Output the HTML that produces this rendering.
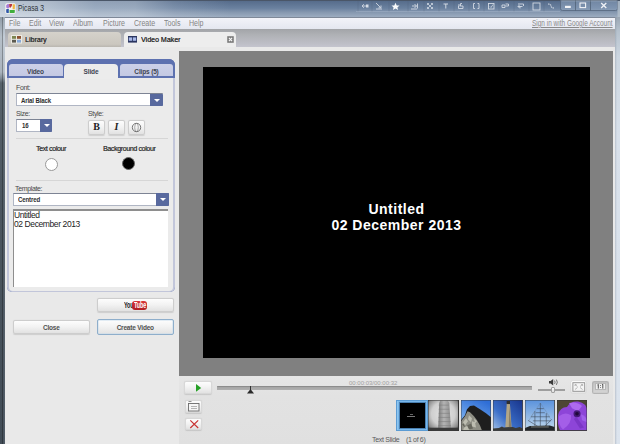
<!DOCTYPE html>
<html><head><meta charset="utf-8">
<style>
*{margin:0;padding:0;box-sizing:border-box}
html,body{width:620px;height:444px;overflow:hidden;background:#e9e9e9;font-family:"Liberation Sans",sans-serif}
.a{position:absolute}
#title{left:0;top:0;width:620px;height:17px;border-top:1px solid #4a5668;
background:linear-gradient(90deg,rgba(235,240,245,.66) 0%,rgba(228,234,240,.6) 50px,rgba(215,224,234,.45) 95px,rgba(220,228,236,.42) 135px,rgba(205,215,228,.18) 175px,rgba(255,255,255,0) 230px),linear-gradient(#566c8b,#6a819f 45%,#8597af 70%,#9cacc0 100%)}
#lframe{left:0;top:17px;width:5px;height:427px;background:linear-gradient(90deg,rgba(0,0,0,.05) 0,rgba(0,0,0,.05) 2px,rgba(0,0,0,.3) 2px,rgba(0,0,0,.3) 3px,rgba(0,0,0,.0) 3px,rgba(255,255,255,.08) 5px),linear-gradient(#9aa6b2 0,#c0cad4 20px,#b4bec8 55px,#8a96a1 61px,#5a6670 66px,#4f5a64 200px,#45505b 444px)}
#rframe{left:615px;top:17px;width:5px;height:427px;background:linear-gradient(90deg,rgba(90,100,115,.25) 0,rgba(90,100,115,0) 2px),linear-gradient(#9aa6b4 0,#b6c2ce 14px,#ccd6e0 40px,#d8e0ea 120px,#dce4ee 444px)}
#menu{left:5px;top:17px;width:610px;height:12px;background:linear-gradient(#f2f3f9,#e4e7f0);border-top:1px solid #7e8898}
#menu span{position:absolute;top:0px;font-size:8.5px;color:#848484;white-space:nowrap;transform:scaleX(.83);transform-origin:0 0}
#tabs{left:5px;top:29px;width:610px;height:18px;background:linear-gradient(#a2a4a8,#b0b2b6 35%,#bdbec6 80%,#c4c4ce)}
#content{left:5px;top:47px;width:609px;height:397px;background:#e9e9e9}
#gray{left:179px;top:51px;width:434px;height:325px;background:#808080}
#black{left:203px;top:67px;width:387px;height:291px;background:#000}
.ttl{font-size:8.8px;color:#2e3238;transform:scaleX(.77);transform-origin:0 0;white-space:nowrap}
.vt{color:#fff;font-weight:bold;font-size:14px;letter-spacing:0.5px;margin-top:-0.5px;text-align:center;width:387px;left:203px}
.tab{top:32px;height:15px;border-radius:4px 4px 0 0}
.tabtxt{font-size:8px;color:#2e2e2e;top:35px;transform:scaleX(.88);transform-origin:0 0;white-space:nowrap;text-shadow:0.3px 0 #444}
#box{left:7px;top:59px;width:168px;height:233px;border:1.5px solid #8c9ac4;border-top:none;border-radius:5px;background:#ececec}
.lbl{font-size:7px;color:#484848;letter-spacing:-0.35px;white-space:nowrap}
.tt{top:67.5px;font-size:6.5px;font-weight:bold;color:#3e4452;text-align:center;letter-spacing:-0.15px;white-space:nowrap}
.combo{background:#fff;border:1px solid #b0b6c4;border-top-color:#7d8494;height:12px}
.dd{background:#58699e;border-radius:0 1px 1px 0}
.dd:after{content:"";position:absolute;left:3.5px;top:4.5px;border-left:3px solid transparent;border-right:3px solid transparent;border-top:3px solid #fff}
.btn{border:1px solid #cdcdcd;border-radius:2px;background:linear-gradient(#fdfdfd,#f3f3f3 45%,#e2e2e2);box-shadow:0 0.5px 1px rgba(0,0,0,.12)}
.btxt{font-size:7px;color:#444;text-align:center;width:100%;top:3px}
.bt{top:323.5px;font-size:6.5px;font-weight:bold;color:#505050;text-align:center;letter-spacing:-0.2px;white-space:nowrap}
.ct{font-size:7px;font-weight:bold;color:#2e2e2e;letter-spacing:-0.15px;white-space:nowrap;transform:scaleX(.87);transform-origin:0 0}
.thumb{top:400px;width:30px;height:31px}
</style></head><body>
<div id="title" class="a"></div>
<div id="lframe" class="a"></div>
<div id="rframe" class="a"></div>
<div id="menu" class="a">
<span style="left:4px">File</span>
<span style="left:23.6px">Edit</span>
<span style="left:44px">View</span>
<span style="left:68px">Album</span>
<span style="left:98px">Picture</span>
<span style="left:129.3px">Create</span>
<span style="left:158.6px">Tools</span>
<span style="left:184.2px">Help</span>
<span style="left:527px;text-decoration:underline;color:#8a8a8a;transform:scaleX(.761)">Sign in with Google Account</span>
</div>
<div id="tabs" class="a"></div>
<div id="content" class="a"></div>

<!-- title icon & text -->
<svg class="a" style="left:4.5px;top:3px" width="11" height="11" viewBox="0 0 11 11">
<rect x="0.3" y="0.3" width="10.4" height="10.4" rx="1.5" fill="#f4f4f2"/>
<path d="M1.2 2.5 Q1.5 1 3 1 L4.2 1.2 L4.5 4.5 L2.5 5.5 L1.2 4.5 Z" fill="#a77ad6"/>
<path d="M4.2 1 L7.2 1 L6.8 3 L5.2 5 L4.3 3.5 Z" fill="#b9363f"/>
<path d="M7.6 1.2 L9.6 1.2 Q9.9 1.5 9.9 2.5 L9.8 6.2 L7.6 6.2 Z" fill="#eeb63e"/>
<path d="M4.6 7 L9.8 7 L9.8 9.2 Q9.8 9.9 9 9.9 L4.6 9.9 Z" fill="#3fae3c"/>
<path d="M1.2 6.2 L3.8 5.8 L3.8 9.9 L2 9.9 Q1.2 9.9 1.2 9 Z" fill="#2d55a8"/>
</svg>
<div class="a ttl" style="left:17.5px;top:3.2px">Picasa 3</div>

<!-- toolbar icons -->
<svg class="a" style="left:350px;top:0" width="270" height="17" viewBox="350 0 270 17">
<g stroke="#51637a" stroke-width="0.6" opacity="0.45">
<path d="M358 1 V12 M372 1 V12 M389 1 V12 M408 1 V12 M424 1 V12 M439 1 V12 M454 1 V12 M469 1 V12 M484 1 V12 M499 1 V12 M514 1 V12 M529 1 V12 M544 1 V12"/>
</g>
<path d="M356 11.5 H560" stroke="#a9b8cb" stroke-width="0.8" opacity="0.6"/>
<g fill="none" stroke="#eef1f6" stroke-width="0.85" opacity="0.8">
<path d="M362 6 H368 M364 4.2 L362 6 L364 7.8"/><rect x="366" y="4.5" width="2.5" height="3" fill="#f4f6fa" stroke="none"/>
<path d="M376 3 L380.5 7.5 M378.5 7.8 H381 V5.5 M376 9 H382" stroke-width="0.9"/>
<path d="M412 6 H416.5 M414.5 4 L416.5 6 L414.5 8 M417.5 3.5 V8.5 M411 9 H417" stroke-width="0.9"/>
<path d="M427.5 3.5 L432.5 8.5 M432.5 3.5 L427.5 8.5 M427.5 3.5 H429 M427.5 3.5 V5 M432.5 8.5 H431 M432.5 8.5 V7 M432.5 3.5 H431 M432.5 3.5 V5 M427.5 8.5 H429 M427.5 8.5 V7" stroke-width="0.8"/>
<path d="M443.5 4 H448 M445.8 4 V8.5" stroke-width="1"/>
<path d="M459 4 V6 H458.5 V8.5 H463 V6 H459.5 M460.5 6 V3.5 H462" stroke-width="0.9"/>
<path d="M473.5 3.5 V8.5 M479 3.5 V8.5 M473.5 3.5 H475 M473.5 8.5 H475 M479 3.5 H477.5 M479 8.5 H477.5" stroke-width="0.9"/>
<rect x="488.5" y="3.5" width="5.5" height="5.5" stroke-width="0.9"/><path d="M490 6.5 L491 7.5 L493 4.5" stroke-width="0.8"/>
<path d="M502 5 H505 V7.5 H502 Z M505.5 4 H508.5 V6 H505.5" stroke-width="0.9"/>
<path d="M518 4 H523.5 V6 M518 6.5 H522.5 M518 6.5 L519.5 5 M518 6.5 L519.5 8 M520 8.5 V6.5" stroke-width="0.9"/>
<rect x="533" y="3" width="7" height="7" stroke-width="0.9"/>
<path d="M548 4 Q551 4 551 6 Q551 8 554 8" stroke-width="1.1" stroke-dasharray="1.5 0.7"/>
</g>
<path d="M395.5 2.8 L396.7 5.4 L399.5 5.6 L397.4 7.4 L398.1 10 L395.5 8.6 L392.9 10 L393.6 7.4 L391.5 5.6 L394.3 5.4 Z" fill="#fbfcfd"/>
<!-- window buttons -->
<path d="M560.5 0 V8.5 Q560.5 10.5 562.5 10.5 H615.5 Q617.5 10.5 617.5 8.5 V0" fill="rgba(175,195,220,.3)" stroke="#56667c" stroke-width="0.8"/>
<path d="M575.5 0 V10.5 M590.5 0 V10.5" stroke="#4b5b70" stroke-width="0.7"/>
<path d="M561.5 1 H616.5" stroke="rgba(255,255,255,.25)" stroke-width="0.8"/>
<rect x="565" y="5.8" width="5.8" height="2.2" fill="#f0f2f6"/>
<rect x="580" y="3" width="5.6" height="4.6" fill="none" stroke="#f0f2f6" stroke-width="1.1"/>
<path d="M601.2 3 L606.3 8 M606.3 3 L601.2 8" stroke="#f0f2f6" stroke-width="1.3"/>
<rect x="617.5" y="1" width="2.5" height="16" fill="#b4c0cc" opacity="0.8"/>
</svg>

<!-- tabs -->
<div class="a tab" style="left:8px;width:112.5px;background:linear-gradient(#d5d2cb,#cbc7bf 82%,#b9b6b0)"></div>
<svg class="a" style="left:11px;top:35px" width="11" height="8.5" viewBox="0 0 11 8.5">
<rect x="0" y="0" width="11" height="8.5" fill="#ecebe4"/>
<rect x="1" y="1" width="4" height="2.8" fill="#7d8550"/>
<rect x="6" y="1" width="4" height="2.8" fill="#8d5232"/>
<rect x="1" y="4.8" width="4" height="2.8" fill="#5c5a50"/>
<rect x="6" y="4.8" width="4" height="2.8" fill="#86a8d8"/>
</svg>
<div class="a tabtxt" style="left:25.3px">Library</div>
<div class="a tab" style="left:124px;width:112px;background:#ededed"></div>
<svg class="a" style="left:128px;top:36px" width="9" height="6.6" viewBox="0 0 9 6.6">
<rect x="0" y="0" width="9" height="6.6" fill="#2a3560"/>
<rect x="0.8" y="1.4" width="3.3" height="3.4" fill="#a8b8e8"/>
<rect x="4.9" y="1.4" width="3.3" height="3.4" fill="#a8b8e8"/>
</svg>
<div class="a tabtxt" style="left:141px">Video Maker</div>
<svg class="a" style="left:226.5px;top:36px" width="7" height="7" viewBox="0 0 7 7">
<rect x="0.3" y="0.3" width="6.4" height="6.4" rx="0.8" fill="#7c7c7c" stroke="#8a8a8a" stroke-width="0.6"/>
<path d="M1.9 1.9 L5.1 5.1 M5.1 1.9 L1.9 5.1" stroke="#fafafa" stroke-width="1.1"/>
</svg>

<!-- left panel box -->
<div class="a" style="left:7px;top:59px;width:168px;height:233px;border-radius:6px 6px 5px 5px;background:#5d71b0"></div>
<div class="a" style="left:7px;top:76px;width:167.5px;height:216px;border-radius:0 0 5px 5px;background:#c2c6da"></div>
<div class="a" style="left:7px;top:59px;width:168px;height:19px;background:#5d71b0;border-radius:6px 6px 0 0"></div>
<div class="a" style="left:8.5px;top:64.3px;width:54px;height:12px;background:linear-gradient(#ccd0e8,#c4c9e3);border-radius:3px 3px 0 0"></div>
<div class="a" style="left:120px;top:64.3px;width:53px;height:12px;background:linear-gradient(#ccd0e8,#c4c9e3);border-radius:3px 3px 0 0"></div>
<div class="a" style="left:8.5px;top:77.5px;width:164.5px;height:213.5px;background:#ebebeb;border-radius:0 0 4px 4px"></div>
<div class="a" style="left:64px;top:64px;width:54px;height:15px;background:#ececec;border-radius:4px 4px 0 0"></div>
<div class="a tt" style="left:8.5px;width:54px">Video</div>
<div class="a tt" style="left:64px;width:54px">Slide</div>
<div class="a tt" style="left:120px;width:53px">Clips (5)</div>

<div class="a lbl" style="left:16px;top:84px">Font:</div>
<div class="a combo" style="left:16px;top:93px;width:147px;height:13px"></div>
<div class="a ct" style="left:21.3px;top:96.6px">Arial Black</div>
<div class="a dd" style="left:150px;top:94px;width:13px;height:12px"></div>

<div class="a lbl" style="left:16px;top:110px">Size:</div>
<div class="a combo" style="left:16px;top:119px;width:36px;height:13px"></div>
<div class="a ct" style="left:21.6px;top:122.4px">16</div>
<div class="a dd" style="left:40px;top:119px;width:12px;height:13px"></div>

<div class="a lbl" style="left:88px;top:110px">Style:</div>
<div class="a btn" style="left:88px;top:120px;width:17px;height:15px"></div>
<div class="a" style="left:88px;top:121px;width:17px;text-align:center;font-family:'Liberation Serif',serif;font-weight:bold;font-size:10px;color:#222">B</div>
<div class="a btn" style="left:108px;top:120px;width:17px;height:15px"></div>
<div class="a" style="left:108px;top:121px;width:17px;text-align:center;font-family:'Liberation Serif',serif;font-weight:bold;font-style:italic;font-size:10px;color:#222">I</div>
<div class="a btn" style="left:128px;top:120px;width:17px;height:15px"></div>
<svg class="a" style="left:131px;top:122px" width="11" height="11" viewBox="0 0 11 11"><circle cx="5.5" cy="5.5" r="4.2" fill="none" stroke="#555" stroke-width="0.8"/><ellipse cx="5.5" cy="5.5" rx="1.8" ry="4" fill="none" stroke="#777" stroke-width="0.6"/></svg>

<div class="a" style="left:16px;top:138px;width:152px;height:1px;background:#d6d6d6"></div>
<div class="a lbl" style="left:36px;top:145px;color:#383838;text-shadow:0.15px 0 #555">Text colour</div>
<div class="a lbl" style="left:103px;top:145px;color:#383838;text-shadow:0.15px 0 #555">Background colour</div>
<div class="a" style="left:45px;top:158px;width:13px;height:13px;border-radius:50%;background:#fff;border:1px solid #999"></div>
<div class="a" style="left:122px;top:156.5px;width:13px;height:13px;border-radius:50%;background:#000;border:1px solid #666"></div>
<div class="a" style="left:16px;top:180px;width:152px;height:1px;background:#d6d6d6"></div>

<div class="a lbl" style="left:15px;top:185px">Template:</div>
<div class="a combo" style="left:13px;top:193px;width:156px;height:13px"></div>
<div class="a ct" style="left:18.3px;top:196.4px">Centred</div>
<div class="a dd" style="left:156px;top:193px;width:13px;height:13px"></div>

<div class="a" style="left:13px;top:209px;width:155px;height:78px;background:#fff;border-top:2px solid #8e8e8e;border-left:1px solid #8e8e8e"></div>
<div class="a" style="left:14px;top:211px;font-size:8.5px;line-height:8.7px;color:#222;letter-spacing:-0.4px;white-space:nowrap">Untitled<br>02 December 2013</div>

<!-- buttons -->
<div class="a btn" style="left:96.5px;top:297.5px;width:77.5px;height:14.5px"></div>
<div class="a" style="left:123.6px;top:300.3px;font-size:9px;font-weight:bold;color:#1a1a1a;transform:scaleX(0.6);transform-origin:0 0;letter-spacing:-0.2px;white-space:nowrap" id="yt1">You</div>
<div class="a" style="left:132.4px;top:301px;width:14.5px;height:8.8px;background:linear-gradient(#d8363a,#b01c22);border-radius:3px"></div>
<div class="a" style="left:133.6px;top:300.3px;font-size:9px;font-weight:bold;color:#fff;transform:scaleX(0.6);transform-origin:0 0;letter-spacing:-0.2px;white-space:nowrap" id="yt2">Tube</div>
<div class="a btn" style="left:12.5px;top:319.5px;width:77.5px;height:14.5px"></div>
<div class="a bt" style="left:12.5px;width:77.5px">Close</div>
<div class="a btn" style="left:96.5px;top:319px;width:77.5px;height:16px;border-color:#8eaecb;box-shadow:inset 0 0 0 0.5px #c8dcec"></div>
<div class="a bt" style="left:96.5px;width:77.5px">Create Video</div>

<!-- viewer -->
<div id="gray" class="a"></div>
<div id="black" class="a"></div>
<div class="a vt" style="top:201px">Untitled</div>
<div class="a vt" style="top:217px">02 December 2013</div>

<!-- controls -->
<div class="a" style="left:179px;top:376px;width:434px;height:68px;background:linear-gradient(#e6e6e6,#e2e2e2 20px,#e0e0e0)"></div>
<div class="a btn" style="left:184px;top:380.5px;width:27.5px;height:13.5px;border-color:#d8d8d8"></div>
<svg class="a" style="left:195px;top:383px" width="8" height="10" viewBox="0 0 8 10"><path d="M1 1 L6.2 4.9 L1 8.8 Z" fill="#25a025"/></svg>
<div class="a" style="left:217px;top:386px;width:315px;height:3.6px;background:linear-gradient(#8c8c8c 0,#8c8c8c 1px,#a4a4a4 1px,#b0b0b0);border-radius:0.5px"></div>
<div class="a" style="left:349px;top:380px;font-size:6px;color:#a0a0a0;white-space:nowrap">00:00:03/00:00:32</div>
<div class="a" style="left:249.9px;top:385.5px;width:0.8px;height:4.5px;background:#333"></div>
<svg class="a" style="left:246.8px;top:389.3px" width="7" height="4.6" viewBox="0 0 7 4.6"><path d="M0 4.6 L3.5 0 L7 4.6 Z" fill="#2a2a2a"/></svg>

<svg class="a" style="left:548.8px;top:379.3px" width="11" height="6.5" viewBox="0 0 11 6.5"><path d="M0 2 L1.6 2 L4.2 0 L4.2 6.5 L1.6 4.5 L0 4.5 Z" fill="#3a3a3a"/><path d="M5.6 1.6 Q6.6 3.25 5.6 4.9 M7.4 0.6 Q9.2 3.25 7.4 5.9" stroke="#555" fill="none" stroke-width="0.8"/></svg>
<div class="a" style="left:538px;top:389px;width:27px;height:2px;background:#9e9e9e"></div>
<div class="a" style="left:550.8px;top:386.9px;width:4.4px;height:6.2px;background:linear-gradient(#fafafa,#dcdcdc);border:0.8px solid #a0a0a0;border-radius:1px"></div>

<div class="a" style="left:571px;top:380.6px;width:15px;height:12.2px;border-radius:1.5px;background:linear-gradient(#fafafa,#e6e6e6);box-shadow:0 0 0.8px rgba(0,0,0,.35)"></div>
<svg class="a" style="left:572px;top:382px" width="14" height="10" viewBox="0 0 14 10">
<rect x="0.9" y="0.7" width="11.8" height="8.6" fill="#f4f4f4" stroke="#8e8e8e" stroke-width="0.9"/>
<path d="M3 2.5 L5.5 4.5 M3 2.5 V4 M3 2.5 H4.5 M10.6 2.5 L8 4.5 M10.6 2.5 V4 M10.6 2.5 H9.1 M3 7.5 L5.5 5.5 M10.6 7.5 L8 5.5" stroke="#b0b0b0" stroke-width="0.9" fill="none"/>
</svg>
<div class="a" style="left:591.6px;top:380.5px;width:17px;height:13.3px;border-radius:1.5px;background:linear-gradient(#c4c4c4,#d4d4d4);border:0.8px solid #b4b4b4;box-shadow:inset 0 0 1px rgba(0,0,0,.3)"></div>
<div class="a" style="left:595.2px;top:383.3px;width:10.8px;height:6.4px;background:#f0f0f0;border:0.5px solid #b8b8b8"></div>
<svg class="a" style="left:595.2px;top:383.3px" width="11" height="7" viewBox="0 0 11 7"><path d="M3.3 1.3 V5.6 M2.5 2 L3.3 1.3 M7.8 1.3 V5.6 M7 2 L7.8 1.3" stroke="#2a2a2a" stroke-width="0.8" fill="none"/><rect x="5.1" y="2.2" width="0.8" height="0.8" fill="#444"/><rect x="5.1" y="4.2" width="0.8" height="0.8" fill="#444"/></svg>

<div class="a btn" style="left:185px;top:400px;width:16.5px;height:12.8px;border-color:#d8d8d8"></div>
<svg class="a" style="left:186px;top:400px" width="15" height="13" viewBox="0 0 15 13"><path d="M2.5 1.5 H5.5" stroke="#777" stroke-width="0.8"/><rect x="2.5" y="3.5" width="10.5" height="7.5" fill="#f6f6f6" stroke="#6a6a6a" stroke-width="0.9"/><path d="M5 6.5 H11 M5 8.5 H11" stroke="#8a8a8a" stroke-width="0.6"/></svg>
<div class="a btn" style="left:185px;top:417.5px;width:16.5px;height:12.5px;border-color:#d8d8d8"></div>
<svg class="a" style="left:189px;top:419px" width="10" height="10" viewBox="0 0 10 10"><path d="M1.3 1.4 L9.2 9 M9.2 1.4 L1.3 9" stroke="#c83434" stroke-width="1.2"/></svg>

<!-- thumbnails -->
<div class="a" style="left:396px;top:400px;width:31.7px;height:31px;background:#8ec6f0;border:1px solid #5b9bd3"></div>
<div class="a" style="left:398.6px;top:402.4px;width:27px;height:26.2px;background:#000;border:0.6px solid #4a7fb0;box-shadow:0 0 0 0.6px #6aaee6"></div>
<div class="a" style="left:409.8px;top:414.2px;width:3px;height:0.5px;background:#666"></div>
<div class="a" style="left:406.8px;top:416.3px;width:8.5px;height:0.5px;background:#777"></div>
<svg class="a" style="left:428.3px;top:400px" width="30.5" height="30.8" viewBox="0 0 30 30" preserveAspectRatio="none">
<defs><radialGradient id="pg" cx="50%" cy="45%" r="70%"><stop offset="0" stop-color="#e4e4e4"/><stop offset="0.55" stop-color="#cfcfcf"/><stop offset="0.85" stop-color="#8a8a8a"/><stop offset="1" stop-color="#404040"/></radialGradient>
<linearGradient id="tg" x1="0" x2="1"><stop offset="0" stop-color="#7a7a7a"/><stop offset="0.45" stop-color="#b4b4b4"/><stop offset="1" stop-color="#8a8a8a"/></linearGradient></defs>
<rect width="30" height="30" fill="url(#pg)"/>
<path d="M12 0.5 L19.5 0.5 L21 3 L22.5 28 L10 28 L11 3 Z" fill="url(#tg)"/>
<path d="M10.6 5 H20.4 M10.5 9 H20.9 M10.4 13 H21.3 M10.3 17 H21.7 M10.2 21 H22.2 M10.1 25 H22.6" stroke="#7a7a7a" stroke-width="0.7" opacity="0.7"/>
<rect y="27" width="30" height="3" fill="#3a3a3a"/>
<rect width="30" height="30" fill="none" stroke="#333" stroke-width="1"/>
</svg>
<svg class="a" style="left:460.8px;top:400px" width="30" height="30.5" viewBox="0 0 30 30" preserveAspectRatio="none">
<defs><linearGradient id="sg" x1="0.7" y1="0" x2="0.2" y2="1"><stop offset="0" stop-color="#2f6ed6"/><stop offset="1" stop-color="#8cc0f4"/></linearGradient></defs>
<rect width="30" height="30" fill="url(#sg)"/>
<path d="M0 20 L4 15 L6 9 L9 6 L13 5.5 L19 9 L25 13 L30 17 L30 30 L0 30 Z" fill="#1e1e1e"/>
<path d="M0 21 L4 16 L6.5 11 L9 12 L13 16 L16 20 L19 25 L21 30 L0 30 Z" fill="#8e8e84"/>
<path d="M2 22 L5 18 L7 21 L4 25 Z M8 15 L11 18 L10 22 L7 19 Z M11 21 L14 22 L15 27 L11 26 Z M3 27 L7 25 L9 30 L2 30 Z M13 18 L16 21 L14 23 Z" fill="#bdbdb0"/>
<path d="M6 25 L10 23 L12 28 L8 29 Z M1 24 L3 23 L4 27 Z" fill="#66665c"/>
<rect width="30" height="30" fill="none" stroke="#333" stroke-width="0.8"/>
</svg>
<svg class="a" style="left:493.1px;top:400px" width="29.7" height="30.5" viewBox="0 0 30 30" preserveAspectRatio="none">
<defs><linearGradient id="cg" x1="1" y1="0" x2="0" y2="1"><stop offset="0" stop-color="#17338a"/><stop offset="0.6" stop-color="#3a6ec8"/><stop offset="1" stop-color="#a4c2e8"/></linearGradient></defs>
<rect width="30" height="30" fill="url(#cg)"/>
<path d="M14.2 2 L16.8 2 L17.2 5 L18.8 27 L12.4 27 L13.8 5 Z" fill="#b2a686"/>
<path d="M13.8 1 H17.2 V4 H13.8 Z" fill="#2e2e2e"/>
<path d="M16.5 6 L18.5 27 L16 27 Z" fill="#6e6652" opacity="0.6"/>
<path d="M0 30 L0 28 L6 27.5 L9 26 L11 27 L20 26.5 L23 27.5 L27 26.5 L30 28 L30 30 Z" fill="#3a3a38"/>
<rect width="30" height="30" fill="none" stroke="#333" stroke-width="0.8"/>
</svg>
<svg class="a" style="left:525.1px;top:400px" width="29.7" height="30.5" viewBox="0 0 30 30" preserveAspectRatio="none">
<defs><linearGradient id="hg" x1="0" y1="0" x2="0" y2="1"><stop offset="0" stop-color="#5a92dc"/><stop offset="1" stop-color="#c0d8ec"/></linearGradient></defs>
<rect width="30" height="30" fill="url(#hg)"/>
<g stroke="#3a4450" stroke-width="0.55" fill="none">
<path d="M15.5 3 V26 M10 11 V26 M21.5 13 V26 M6 16.5 H25 M8 20.5 H26 M11 12.5 H20 M12 8.5 H19 M3 20 L13 26 M27 19 L20 26"/>
<path d="M15.5 3 L6 16.5 M15.5 3 L25 16.5 M10 11 L4 20 M21.5 13 L27 20" stroke="#5a6470" stroke-width="0.35" opacity="0.6"/>
</g>
<path d="M0 30 L0 27.5 L5 25.5 L25 25 L30 26.5 L30 30 Z" fill="#22262a"/>
<path d="M6 26.5 H24" stroke="#b8b8a8" stroke-width="0.6"/>
<rect width="30" height="30" fill="none" stroke="#333" stroke-width="0.8"/>
</svg>
<svg class="a" style="left:557.1px;top:400px" width="30" height="30.5" viewBox="0 0 30 30" preserveAspectRatio="none">
<rect width="30" height="30" fill="#4d4634"/>
<path d="M1 15 Q3 7 10 7 Q13 1 21 1.5 Q30 3 30 11 L30 30 L3 30 Q0 24 1 15 Z" fill="#8d45d8"/>
<path d="M2 16 Q8 11 14 15 Q15 23 6 29 Q1 25 2 16 Z" fill="#a45ee8"/>
<path d="M12 3 Q20 1 25 6 L21 11 L15 8 Z" fill="#ad6aee"/>
<path d="M24 14 Q30 16 30 22 L25 20 Z" fill="#a060ea"/>
<ellipse cx="20" cy="13.5" rx="3.5" ry="3.5" fill="#3a1468" opacity="0.9"/><ellipse cx="20" cy="13.5" rx="1.8" ry="1.8" fill="#1e0838"/>
<path d="M19 16 L27 27 L23 28 L17 19 Z" fill="#6a2ab4" opacity="0.5"/>
<rect width="30" height="30" fill="none" stroke="#333" stroke-width="0.8"/>
</svg>

<div class="a" style="left:372px;top:435.5px;font-size:7px;color:#5a5a5a;letter-spacing:-0.3px;white-space:nowrap">Text Slide</div>
<div class="a" style="left:406px;top:435.5px;font-size:7px;color:#5a5a5a;letter-spacing:-0.35px;white-space:nowrap">(1 of 6)</div>
</body></html>
